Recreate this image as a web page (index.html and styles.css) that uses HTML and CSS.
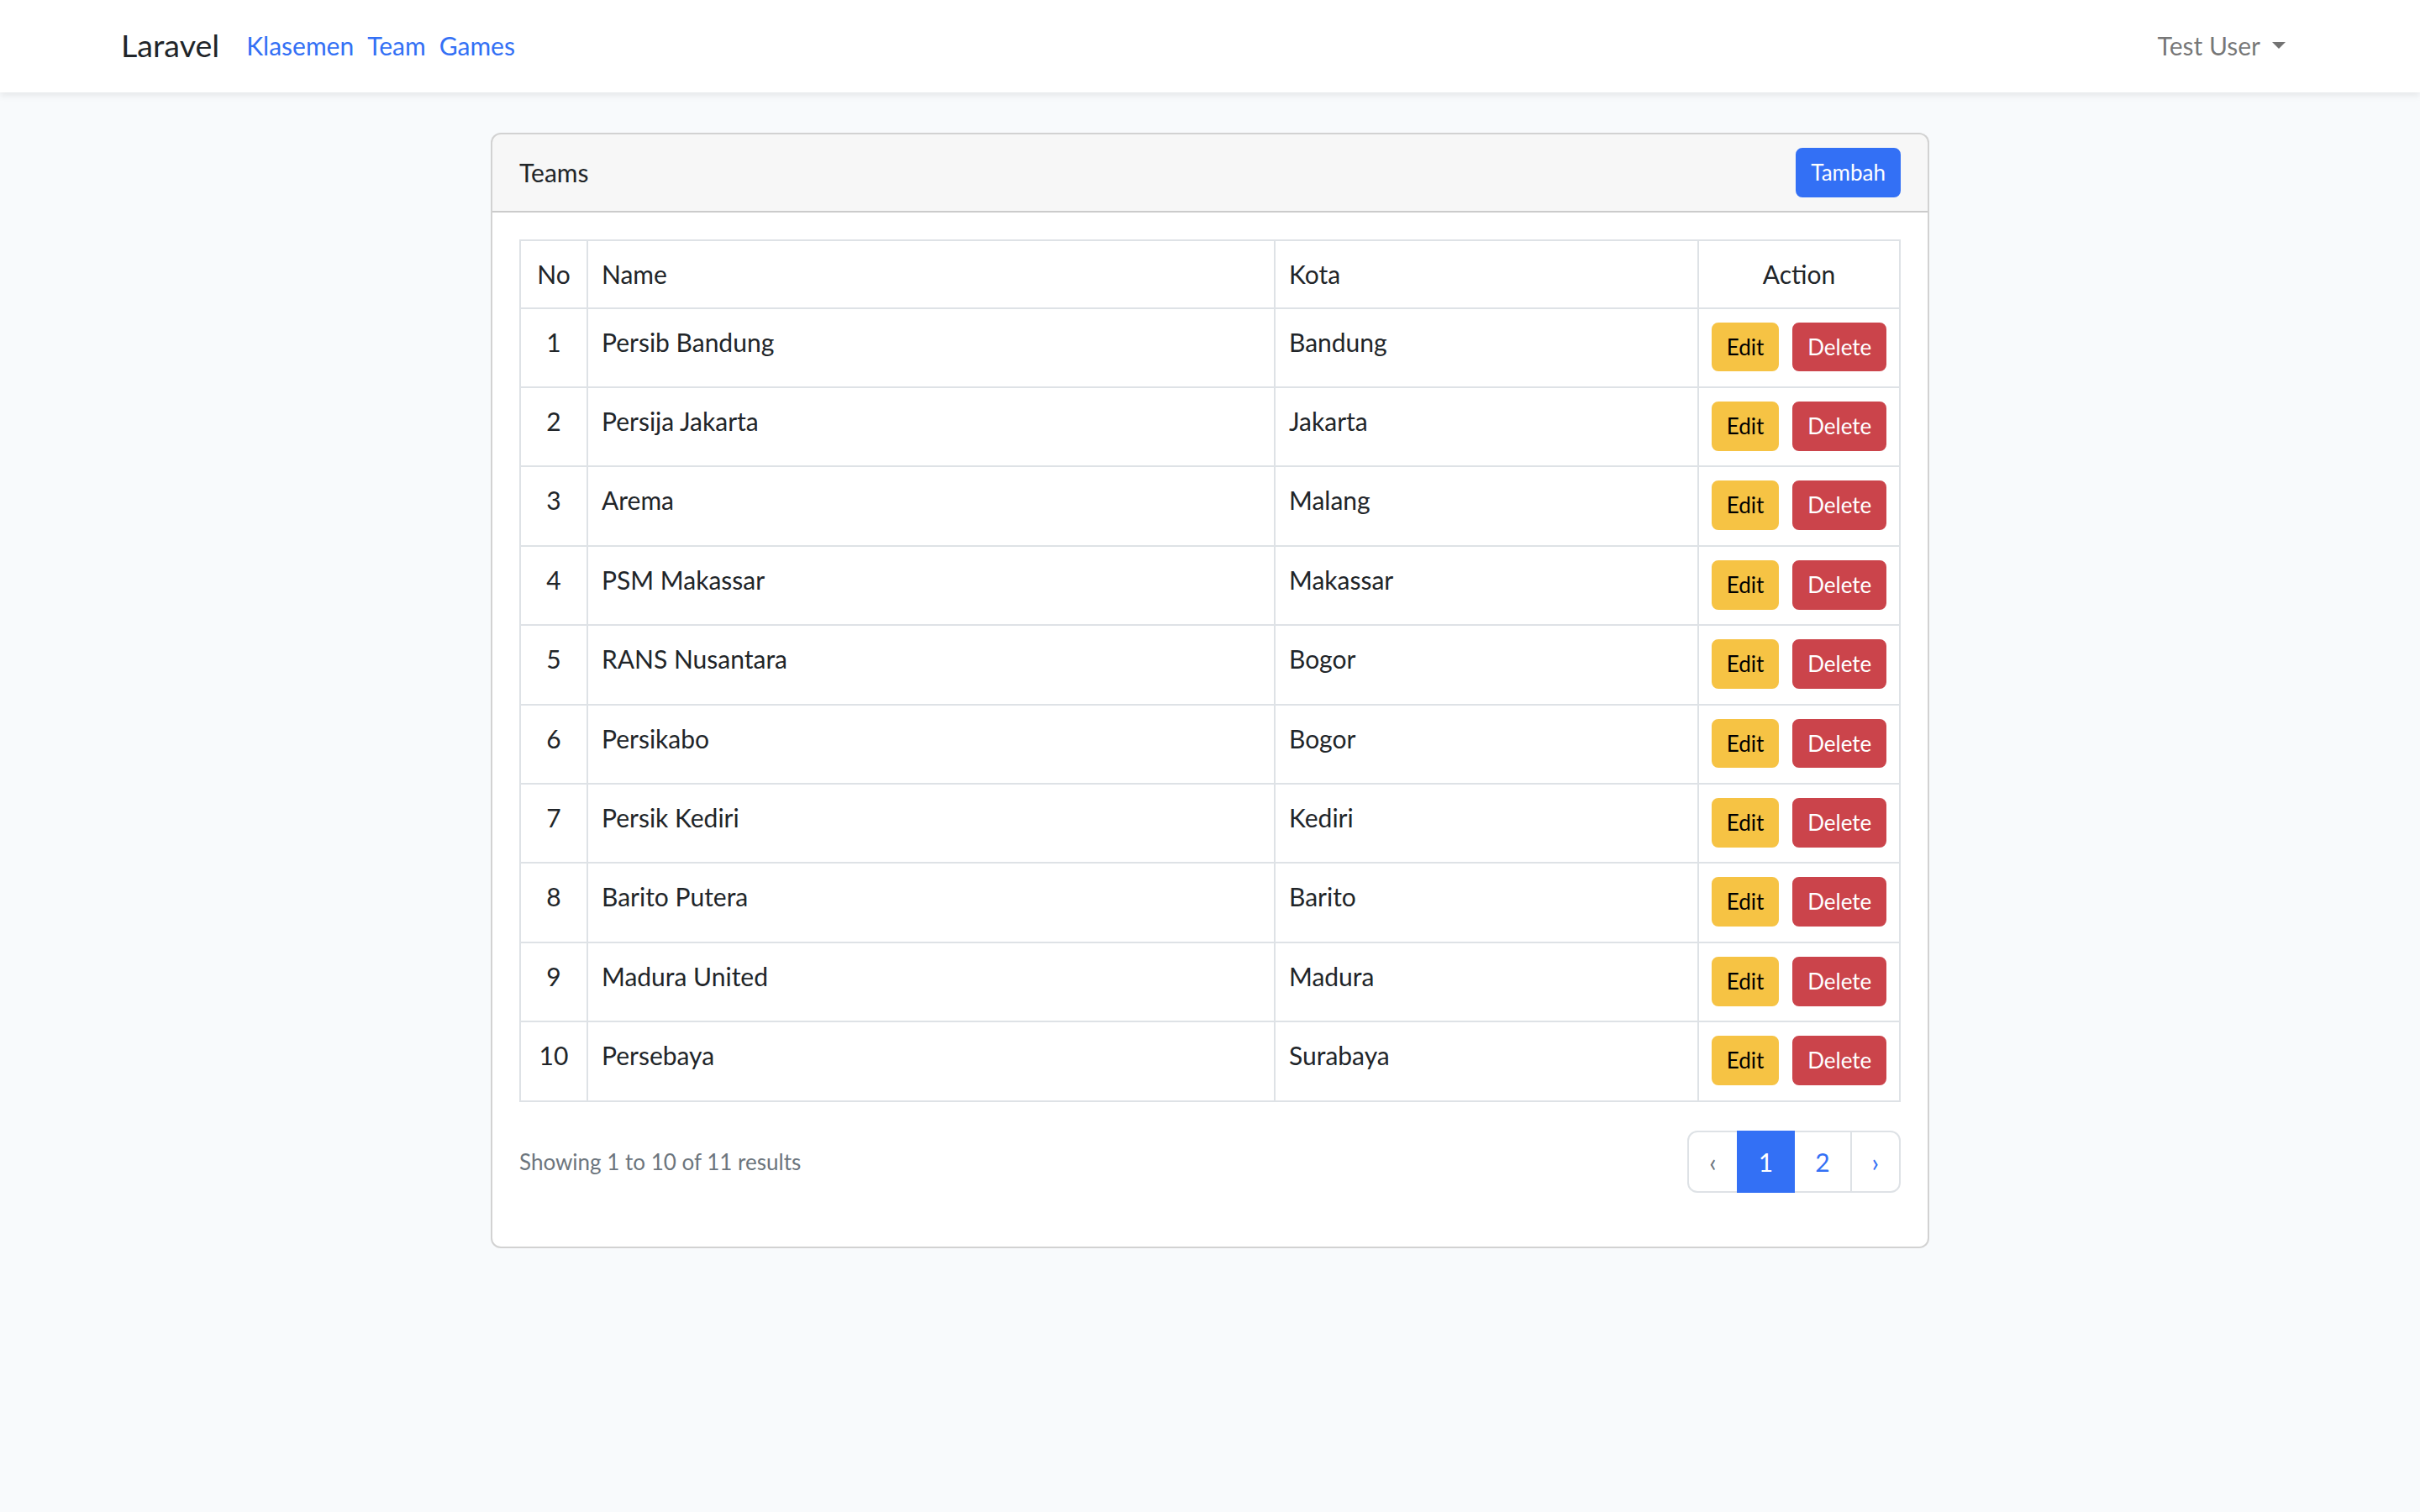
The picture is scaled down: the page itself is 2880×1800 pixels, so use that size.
FILE: index.html
```html
<!DOCTYPE html>
<html lang="id">
<head>
<meta charset="utf-8">
<title>Teams</title>
<link rel="stylesheet" href="styles.css">
</head>
<body>
<nav class="navbar">
  <div class="container nav-inner">
    <a class="brand" href="#">Laravel</a>
    <ul class="nav-left">
      <li><a class="nav-link" href="#">Klasemen</a></li>
      <li><a class="nav-link" href="#">Team</a></li>
      <li><a class="nav-link" href="#">Games</a></li>
    </ul>
    <div class="nav-right">
      <a class="user-link" href="#">Test User<span class="caret"></span></a>
    </div>
  </div>
</nav>

<main class="main">
  <div class="card">
    <div class="card-header">
      <span class="card-title">Teams</span>
      <a class="btn btn-sm btn-primary" href="#">Tambah</a>
    </div>
    <div class="card-body">
      <table class="table">
        <colgroup>
          <col class="c-no">
          <col class="c-name">
          <col class="c-kota">
          <col class="c-action">
        </colgroup>
        <thead>
          <tr><th class="center">No</th><th>Name</th><th>Kota</th><th class="center">Action</th></tr>
        </thead>
        <tbody>
          <tr><td class="center">1</td><td>Persib Bandung</td><td>Bandung</td><td><div class="actions"><a class="btn btn-sm btn-warning" href="#">Edit</a><button class="btn btn-sm btn-danger">Delete</button></div></td></tr>
          <tr><td class="center">2</td><td>Persija Jakarta</td><td>Jakarta</td><td><div class="actions"><a class="btn btn-sm btn-warning" href="#">Edit</a><button class="btn btn-sm btn-danger">Delete</button></div></td></tr>
          <tr><td class="center">3</td><td>Arema</td><td>Malang</td><td><div class="actions"><a class="btn btn-sm btn-warning" href="#">Edit</a><button class="btn btn-sm btn-danger">Delete</button></div></td></tr>
          <tr><td class="center">4</td><td>PSM Makassar</td><td>Makassar</td><td><div class="actions"><a class="btn btn-sm btn-warning" href="#">Edit</a><button class="btn btn-sm btn-danger">Delete</button></div></td></tr>
          <tr><td class="center">5</td><td>RANS Nusantara</td><td>Bogor</td><td><div class="actions"><a class="btn btn-sm btn-warning" href="#">Edit</a><button class="btn btn-sm btn-danger">Delete</button></div></td></tr>
          <tr><td class="center">6</td><td>Persikabo</td><td>Bogor</td><td><div class="actions"><a class="btn btn-sm btn-warning" href="#">Edit</a><button class="btn btn-sm btn-danger">Delete</button></div></td></tr>
          <tr><td class="center">7</td><td>Persik Kediri</td><td>Kediri</td><td><div class="actions"><a class="btn btn-sm btn-warning" href="#">Edit</a><button class="btn btn-sm btn-danger">Delete</button></div></td></tr>
          <tr><td class="center">8</td><td>Barito Putera</td><td>Barito</td><td><div class="actions"><a class="btn btn-sm btn-warning" href="#">Edit</a><button class="btn btn-sm btn-danger">Delete</button></div></td></tr>
          <tr><td class="center">9</td><td>Madura United</td><td>Madura</td><td><div class="actions"><a class="btn btn-sm btn-warning" href="#">Edit</a><button class="btn btn-sm btn-danger">Delete</button></div></td></tr>
          <tr><td class="center">10</td><td>Persebaya</td><td>Surabaya</td><td><div class="actions"><a class="btn btn-sm btn-warning" href="#">Edit</a><button class="btn btn-sm btn-danger">Delete</button></div></td></tr>
        </tbody>
      </table>

      <div class="pager-row">
        <p class="showing">Showing <span class="fw">1</span> to <span class="fw">10</span> of <span class="fw">11</span> results</p>
        <ul class="pagination">
          <li class="page-item disabled"><span class="page-link">&lsaquo;</span></li>
          <li class="page-item active"><span class="page-link">1</span></li>
          <li class="page-item"><a class="page-link" href="#">2</a></li>
          <li class="page-item"><a class="page-link" href="#">&rsaquo;</a></li>
        </ul>
      </div>
    </div>
  </div>
</main>
</body>
</html>
```

FILE: styles.css
```css
html {
  zoom: 2;
}

*,
*::before,
*::after {
  box-sizing: border-box;
}

body {
  margin: 0;
  background: #f8fafc;
  color: #212529;
  font-family: "Lato", "Noto Sans", sans-serif;
  font-size: 15px;
  line-height: 23.04px;
}

a {
  text-decoration: none;
}

ul {
  list-style: none;
  margin: 0;
  padding: 0;
}

.container {
  max-width: 1320px;
  margin: 0 auto;
  padding: 0 12px;
}

/* Navbar */
.navbar {
  background: #fff;
  box-shadow: 0 2px 4px rgba(0, 0, 0, 0.075);
  height: 55px;
  display: flex;
  align-items: center;
}

.nav-inner {
  flex: 1;
  display: flex;
  align-items: center;
  margin-top: -1px;
}

.brand {
  color: #212529;
  font-size: 18.8px;
  margin-right: 12px;
  line-height: 27px;
}

.nav-left {
  display: flex;
}

.nav-link {
  color: #3370f5;
  padding: 8px 4px;
  display: block;
}

.nav-right {
  margin-left: auto;
}

.user-link {
  color: rgba(0, 0, 0, 0.55);
  padding: 8px 8px;
  display: flex;
  align-items: center;
}

.caret {
  display: inline-block;
  margin-left: 7px;
  border-top: 4.3px solid rgba(0, 0, 0, 0.55);
  border-left: 4.3px solid transparent;
  border-right: 4.3px solid transparent;
}

/* Main */
.main {
  padding: 24px 0;
  display: flex;
  justify-content: center;
}

.card {
  width: 856px;
  background: #fff;
  border: 1px solid rgba(0, 0, 0, 0.175);
  border-radius: 6px;
  overflow: hidden;
}

.card-header {
  background: rgba(0, 0, 0, 0.03);
  border-bottom: 1px solid rgba(0, 0, 0, 0.175);
  padding: 8px 16px;
  display: flex;
  align-items: center;
  justify-content: space-between;
}

.card-body {
  padding: 16px;
}

/* Buttons */
.btn {
  display: inline-block;
  font-family: inherit;
  border: 1px solid transparent;
  border-radius: 4px;
  cursor: pointer;
  text-align: center;
}

.btn-sm {
  font-size: 13px;
  line-height: 19.4px;
  padding: 4px 8px;
}

.btn-primary {
  background: #3370f5;
  border-color: #3370f5;
  color: #fff;
}

.btn-warning {
  background: #f6c344;
  border-color: #f6c344;
  color: #000;
}

.btn-danger {
  background: #cb444b;
  border-color: #cb444b;
  color: #fff;
}

/* Table */
.table {
  width: 100%;
  border-collapse: collapse;
  table-layout: fixed;
  margin-bottom: 17px;
}

.c-no { width: 40px; }
.c-name { width: 409px; }
.c-kota { width: 252px; }

.table th,
.table td {
  border: 1px solid #dee2e6;
  padding: 8px;
  text-align: left;
  vertical-align: top;
  font-weight: 400;
}

.table th {
  line-height: 23.4px;
}

.table .center {
  text-align: center;
}

.actions {
  display: flex;
  justify-content: center;
  gap: 8px;
  padding-bottom: 0.8px;
}

/* Pagination */
.pager-row {
  display: flex;
  align-items: center;
  justify-content: space-between;
  margin-bottom: 16px;
}

.showing {
  margin: 0;
  font-size: 13px;
  line-height: 20px;
  color: #6c757d;
}

.fw {
  font-weight: 400;
}

.pagination {
  display: flex;
}

.page-link {
  display: block;
  padding: 6px 12px;
  border: 1px solid #dee2e6;
  margin-left: -1px;
  color: #3370f5;
  background: #fff;
  line-height: 23.04px;
}

.page-item:first-child .page-link {
  margin-left: 0;
  border-radius: 6px 0 0 6px;
}

.page-item:last-child .page-link {
  border-radius: 0 6px 6px 0;
}

.page-item.disabled .page-link {
  color: #6c757d;
}

.page-item.active .page-link {
  background: #3370f5;
  border-color: #3370f5;
  color: #fff;
  position: relative;
  z-index: 1;
}
```
